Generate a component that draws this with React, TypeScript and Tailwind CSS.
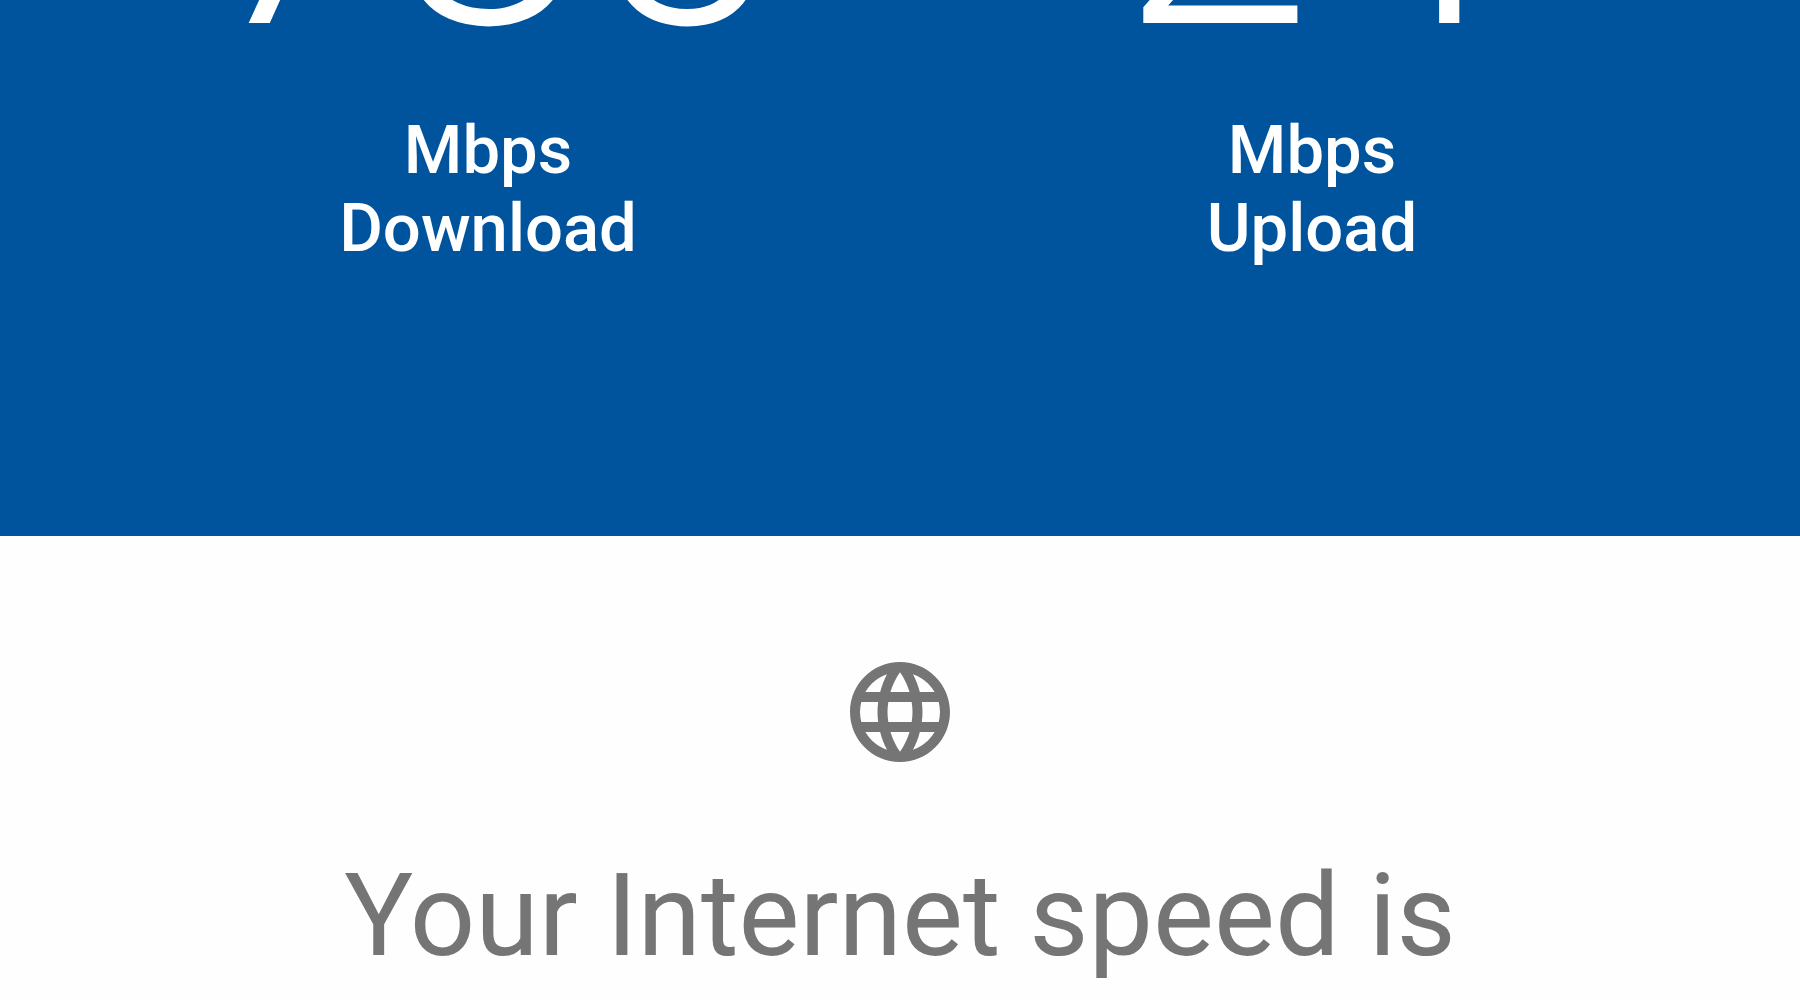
const stats = [
  { value: "785", label: "Download" },
  { value: "24", label: "Upload" },
];

function GlobeIcon() {
  return (
    <svg viewBox="0 0 24 24" className="size-[120px]" fill="currentColor" aria-hidden="true">
      <path d="M11.99 2C6.47 2 2 6.48 2 12s4.47 10 9.99 10C17.52 22 22 17.52 22 12S17.52 2 11.99 2zm6.93 6h-2.95c-.32-1.25-.78-2.45-1.38-3.56 1.84.63 3.37 1.91 4.33 3.56zM12 4.04c.83 1.2 1.48 2.53 1.91 3.96h-3.82c.43-1.43 1.08-2.76 1.91-3.96zM4.26 14C4.1 13.36 4 12.69 4 12s.1-1.36.26-2h3.38c-.08.66-.14 1.32-.14 2s.06 1.34.14 2H4.26zm.82 2h2.95c.32 1.25.78 2.45 1.38 3.56-1.84-.63-3.37-1.9-4.33-3.56zm2.95-8H5.08c.96-1.66 2.49-2.93 4.33-3.56C8.81 5.55 8.35 6.75 8.03 8zM12 19.96c-.83-1.2-1.48-2.53-1.91-3.96h3.82c-.43 1.43-1.08 2.76-1.91 3.96zM14.34 14H9.66c-.09-.66-.16-1.32-.16-2s.07-1.35.16-2h4.68c.09.65.16 1.32.16 2s-.07 1.34-.16 2zm.25 5.56c.6-1.11 1.06-2.31 1.38-3.56h2.95c-.96 1.65-2.49 2.93-4.33 3.56zM16.36 14c.08-.66.14-1.32.14-2s-.06-1.34-.14-2h3.38c.16.64.26 1.31.26 2s-.1 1.36-.26 2h-3.38z" />
    </svg>
  );
}

export default function App() {
  return (
    <main className="min-h-screen bg-[#fefefe] font-['Roboto',sans-serif]">
      <section className="grid grid-cols-2 overflow-hidden bg-[#00549e] px-[76px] pb-[269px] text-white">
        {stats.map((s) => (
          <div key={s.label} className="flex flex-col items-center">
            <p className="-mt-[295px] text-[346px] leading-[400px] font-light">{s.value}</p>
            <p className="mt-1.5 text-center text-[67px] leading-[78px] font-medium">
              Mbps
              <br />
              {s.label}
            </p>
          </div>
        ))}
      </section>
      <section className="flex flex-col items-center pt-[116px] text-[#757575]">
        <GlobeIcon />
        <h1 className="mt-[76px] text-center text-[115px] leading-[136px] font-normal">Your Internet speed is</h1>
      </section>
    </main>
  );
}
